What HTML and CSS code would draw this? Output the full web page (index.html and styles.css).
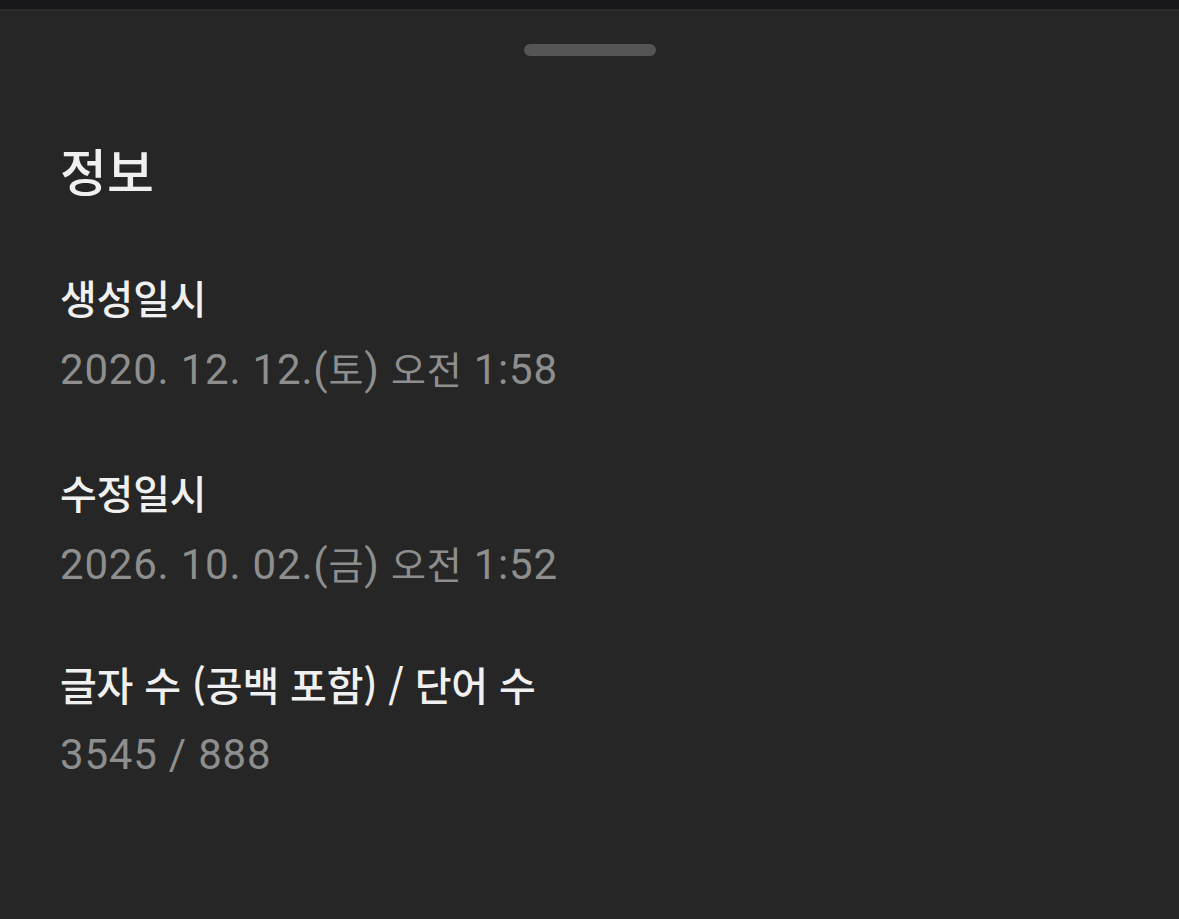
FILE: index.html
```html
<!DOCTYPE html>
<html lang="ko">
<head>
    <meta charset="UTF-8">
    <meta name="viewport" content="width=device-width, initial-scale=1.0">
    <title>정보</title>
    <link rel="stylesheet" href="styles.css">
</head>
<body>

    <!-- Top strip above the sheet -->
    <div class="topbar"></div>

    <!-- Bottom sheet with note info -->
    <div class="sheet">
        <div class="handle"></div>

        <h1 class="sheet-title">정보</h1>

        <div class="info-item">
            <div class="info-label">생성일시</div>
            <div class="info-value">2020. 12. 12.(<span class="ko">토</span>) <span class="ko">오전</span> 1:58</div>
        </div>

        <div class="info-item">
            <div class="info-label">수정일시</div>
            <div class="info-value">2026. 10. 02.(<span class="ko">금</span>) <span class="ko">오전</span> 1:52</div>
        </div>

        <div class="info-item">
            <div class="info-label">글자 수 (공백 포함) / 단어 수</div>
            <div class="info-value">3545 / 888</div>
        </div>
    </div>

</body>
</html>
```

FILE: styles.css
```css
html, body {
    height: 100%;
}
body {
    margin: 0;
    padding: 0;
    background: #262626;
    font-family: "Noto Sans CJK KR", "Noto Sans", sans-serif;
    display: flex;
    flex-direction: column;
}
.topbar {
    height: 9px;
    background: #18181a;
}
.sheet {
    flex: 1;
    background: #262626;
    border-top: 2px solid #2a2a2a;
    padding: 0 60px;
}
.handle {
    width: 132px;
    height: 12px;
    margin: 33px auto 0;
    border-radius: 6px;
    background: #555555;
}
.sheet-title {
    margin: 84px 0 0;
    font-size: 51px;
    font-weight: 500;
    line-height: 60px;
    color: #f0f0f0;
}
.info-item {
    margin-top: 72px;
}
.info-item:last-child {
    margin-top: 69px;
}
.info-label {
    font-size: 40px;
    font-weight: 500;
    line-height: 50px;
    letter-spacing: -0.2px;
    color: #f0f0f0;
}
.info-value {
    margin-top: 21px;
    font-family: "Roboto", "Noto Sans CJK KR", sans-serif;
    font-size: 42px;
    font-weight: 400;
    line-height: 50px;
    letter-spacing: 0.8px;
    color: #8e8e8e;
}
.info-value .ko {
    font-family: "Noto Sans CJK KR", sans-serif;
    font-weight: 400;
    font-size: 38px;
}
```
